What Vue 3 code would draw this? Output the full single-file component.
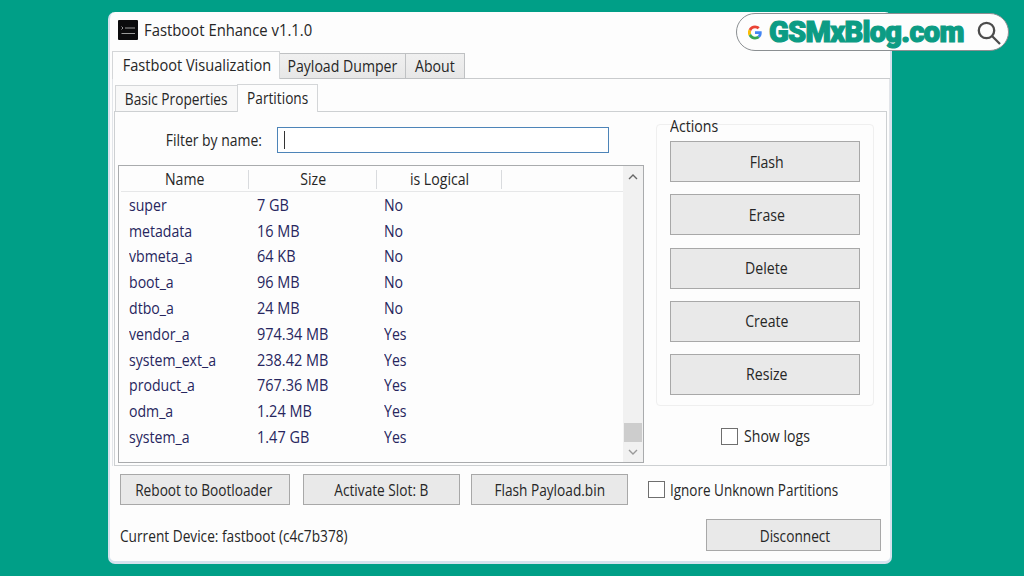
<template>
  <div class="desktop">
    <div class="window">
      <header class="titlebar">
        <svg class="app-icon" viewBox="0 0 20 20">
          <rect width="20" height="20" rx="1" fill="#0b0b0d" />
          <path d="M3.500 6.500l1.500 1.500-1.500 1.500M7 8H17M3.500 13.500H17" fill="none" stroke="#aaa" stroke-width="0.9" />
        </svg>
        <span class="text t-title">Fastboot Enhance v1.1.0</span>
      </header>

      <nav class="tabs main-tabs">
        <div class="tab active"><span class="text t-visual">Fastboot Visualization</span></div>
        <div class="tab grey dumper"><span class="text">Payload Dumper</span></div>
        <div class="tab grey about"><span class="text">About</span></div>
      </nav>

      <div class="page">
        <nav class="tabs sub-tabs">
          <div class="tab basic"><span class="text t-narrow">Basic Properties</span></div>
          <div class="tab active parts"><span class="text t-narrow">Partitions</span></div>
        </nav>

        <section class="panel">
          <div class="left">
            <div class="filter">
              <label class="text t-filter">Filter by name:</label>
              <div class="input"><i class="caret"></i></div>
            </div>
            <div class="list">
              <div class="table">
                <div class="row head">
                  <div class="cell"><span class="text">Name</span></div>
                  <div class="cell"><span class="text">Size</span></div>
                  <div class="cell"><span class="text">is Logical</span></div>
                </div>
                <div v-for="p in partitions" :key="p.name" class="row">
                  <div class="cell"><span class="text">{{ p.name }}</span></div>
                  <div class="cell"><span class="text t-size">{{ p.size }}</span></div>
                  <div class="cell"><span class="text">{{ p.logical }}</span></div>
                </div>
              </div>
              <div class="scrollbar">
                <svg class="arrow" viewBox="0 0 10 6"><path d="M1 5l4-4 4 4" /></svg>
                <div class="thumb"></div>
                <svg class="arrow down" viewBox="0 0 10 6"><path d="M1 1l4 4 4-4" /></svg>
              </div>
            </div>
          </div>

          <div class="right">
            <div class="group">
              <div class="legend"><span class="text">Actions</span></div>
              <div v-for="a in actions" :key="a" class="btn"><span class="text">{{ a }}</span></div>
            </div>
            <div class="check logs"><i class="box"></i><span class="text">Show logs</span></div>
          </div>
        </section>
      </div>

      <div class="bottom">
        <div class="btn reboot"><span class="text t-narrow">Reboot to Bootloader</span></div>
        <div class="btn slot"><span class="text t-narrow">Activate Slot: B</span></div>
        <div class="btn payload"><span class="text t-narrow">Flash Payload.bin</span></div>
        <div class="check"><i class="box"></i><span class="text t-ignore">Ignore Unknown Partitions</span></div>
      </div>

      <footer class="status">
        <span class="text t-device">Current Device: fastboot (c4c7b378)</span>
        <div class="btn disconnect"><span class="text t-narrow">Disconnect</span></div>
      </footer>
    </div>

    <div class="badge">
      <svg class="google" viewBox="0 0 48 48">
        <path fill="#ea4335" d="M24 9.500c3.500 0 6.700 1.200 9.200 3.600l6.900-6.900C35.900 2.400 30.500 0 24 0 14.600 0 6.500 5.400 2.600 13.200l8 6.200C12.400 13.700 17.700 9.500 24 9.500z" />
        <path fill="#4285f4" d="M47 24.600c0-1.600-.2-3.100-.4-4.600H24v9h12.900c-.6 3-2.200 5.500-4.700 7.200l7.700 6C44.400 38 47 31.800 47 24.600z" />
        <path fill="#fbbc05" d="M10.500 28.600A14.500 14.500 0 0 1 10.500 19.400l-8-6.200a24 24 0 0 0 0 21.600z" />
        <path fill="#34a853" d="M24 48c6.500 0 11.900-2.100 15.900-5.800l-7.700-6c-2.200 1.500-4.900 2.300-8.200 2.300-6.300 0-11.600-4.200-13.500-9.900l-8 6.200C6.500 42.600 14.600 48 24 48z" />
      </svg>
      <span class="site">GSMxBlog.com</span>
      <svg class="search" viewBox="0 0 24 24">
        <circle cx="9.500" cy="9.500" r="7.700" />
        <path d="M15 15l8 8" />
      </svg>
    </div>
  </div>
</template>

<script setup>
const partitions = [
  { name: 'super', size: '7 GB', logical: 'No' },
  { name: 'metadata', size: '16 MB', logical: 'No' },
  { name: 'vbmeta_a', size: '64 KB', logical: 'No' },
  { name: 'boot_a', size: '96 MB', logical: 'No' },
  { name: 'dtbo_a', size: '24 MB', logical: 'No' },
  { name: 'vendor_a', size: '974.34 MB', logical: 'Yes' },
  { name: 'system_ext_a', size: '238.42 MB', logical: 'Yes' },
  { name: 'product_a', size: '767.36 MB', logical: 'Yes' },
  { name: 'odm_a', size: '1.24 MB', logical: 'Yes' },
  { name: 'system_a', size: '1.47 GB', logical: 'Yes' },
];

const actions = ['Flash', 'Erase', 'Delete', 'Create', 'Resize'];
</script>

<style>
body {
  margin: 0;
  overflow: hidden;
}
</style>

<style scoped>
* {
  box-sizing: border-box;
}

.desktop {
  position: relative;
  width: 1024px;
  height: 576px;
  padding: 12px 0 0 108px;
  background: #009f87;
  color: #262626;
  font-family: 'Open Sans', 'Noto Sans', sans-serif;
  font-size: 15.500px;
  line-height: 20px;
  white-space: nowrap;
}

/* slightly condensed labels */
.text {
  display: inline-block;
  transform: scaleX(0.91);
}

.t-title {
  transform: scaleX(0.958);
  transform-origin: left;
}

.t-visual {
  transform: scaleX(0.94);
}

.t-narrow {
  transform: scaleX(0.882);
}

.t-filter {
  transform: scaleX(0.9);
  transform-origin: right;
}

.t-ignore {
  transform: scaleX(0.87);
  transform-origin: left;
}

.t-device {
  transform: scaleX(0.883);
  transform-origin: left;
}

.window {
  width: 784px;
  height: 552px;
  padding-left: 2px;
  background: #fdfdfd;
  border: solid #d5e2ed;
  border-width: 0 2px 3px;
  border-radius: 7px;
}

.titlebar {
  display: flex;
  align-items: center;
  gap: 6px;
  height: 39px;
  padding: 0 0 3px 6px;
}

.app-icon {
  width: 20px;
  height: 20px;
}

.tabs {
  display: flex;
  align-items: flex-end;
}

.tab {
  display: flex;
  align-items: center;
  justify-content: center;
  padding-bottom: 1px;
  border: 1px solid #d4d6d8;
  border-bottom: 0;
}

.main-tabs {
  height: 28px;
  box-shadow: inset 0 -1px #c9cbcd;
}

.main-tabs .active {
  width: 168px;
  height: 28px;
  padding-left: 1px;
  background: #fdfdfd;
}

.main-tabs .grey {
  height: 26px;
  padding-bottom: 0;
  background: linear-gradient(#f0f0f0, #e7e7e7);
  border: 1px solid #bfc1c3;
  border-left: 0;
}

.dumper {
  width: 126px;
}

.about {
  width: 59px;
}

.page {
  width: 778px;
  height: 387px;
  padding: 5px 2px 0 1px;
  border: solid #e2e5e9;
  border-width: 0 1px;
}

.sub-tabs {
  height: 27px;
  padding-left: 1px;
}

.basic {
  width: 122px;
  height: 26px;
  padding-bottom: 0;
  background: #f8f8f8;
  border-right: 0;
}

.parts {
  position: relative;
  width: 81px;
  height: 28px;
  margin-bottom: -1px;
  padding-bottom: 2px;
  background: #fdfdfd;
}

.panel {
  display: flex;
  width: 773px;
  height: 355px;
  padding: 0 11px 0 3px;
  border: 1px solid #cdd0d2;
}

.left {
  width: 526px;
}

.filter {
  display: flex;
  align-items: center;
  justify-content: flex-end;
  height: 27px;
  margin: 14px 35px 12px 0;
}

.input {
  width: 332px;
  height: 26px;
  margin-left: 15px;
  padding: 3px 6px;
  background: #fff;
  border: 1.500px solid #4d84b8;
}

.caret {
  display: block;
  width: 1px;
  height: 18px;
  background: #333;
}

.list {
  display: flex;
  height: 298px;
  border: 1px solid #a9abad;
}

.table {
  flex: 1;
  padding-left: 2px;
  color: #27265e;
}

.row {
  display: flex;
  align-items: center;
  height: 25.800px;
}

.cell {
  width: 127.700px;
  padding-left: 8px;
}

.cell .text {
  transform-origin: left;
}

.cell .t-size {
  transform: scaleX(0.935);
}

.row.head {
  height: 26px;
  padding-top: 2px;
  color: #262626;
  border-bottom: 1px solid #e6e7e8;
}

.head .cell {
  width: 128px;
  height: 19px;
  padding: 0 0 0 1px;
  line-height: 18px;
  text-align: center;
  border-right: 1px solid #d9dbde;
}

.head .text {
  transform-origin: center;
}

.head .cell:last-child {
  width: 125px;
}

.scrollbar {
  display: flex;
  flex-direction: column;
  align-items: center;
  justify-content: flex-end;
  width: 20px;
  padding: 8px 0 7px;
  background: #f1f1f1;
}

.arrow {
  width: 10px;
  height: 6px;
  margin-bottom: auto;
  fill: none;
  stroke: #666;
  stroke-width: 1.400;
}

.arrow.down {
  margin: 7px 0 0;
  stroke: #999;
}

.thumb {
  width: 18px;
  height: 19px;
  background: #cdcdcd;
}

.right {
  display: flex;
  flex-direction: column;
  align-items: center;
  width: 218px;
  margin-left: 12px;
}

.group {
  display: flex;
  flex-direction: column;
  gap: 12.200px;
  width: 218px;
  height: 282px;
  margin-top: 12px;
  padding: 0 13px;
  border: 1px solid #efefef;
  border-radius: 4px;
}

.legend {
  align-self: flex-start;
  height: 4px;
  line-height: 2px;
  background: #fdfdfd;
}

.legend .text,
.check .text {
  transform-origin: left;
}

.btn {
  display: flex;
  align-items: center;
  justify-content: center;
  background: #e9e9e9;
  border: 1px solid #a8a8a8;
}

.group .btn {
  height: 41px;
  padding-left: 3px;
}

.check {
  display: flex;
  align-items: center;
}

.box {
  width: 17px;
  height: 17px;
  margin-right: 6px;
  background: #fff;
  border: 1px solid #6f6f6f;
}

.logs {
  margin: 20px 0 0 8px;
}

.bottom {
  display: flex;
  align-items: center;
  height: 31px;
  margin-top: 8px;
  padding-left: 8px;
}

.bottom .btn {
  height: 31px;
}

.reboot {
  width: 170px;
  margin-right: 13px;
  padding-right: 3px;
}

.slot {
  width: 157px;
  margin-right: 11px;
}

.payload {
  width: 157px;
  margin-right: 20px;
}

.bottom .box {
  margin-right: 5px;
}

.status {
  display: flex;
  align-items: center;
  justify-content: space-between;
  height: 32px;
  margin-top: 14px;
  padding: 0 9px 0 8px;
}

.t-device {
  padding-top: 2px;
}

.disconnect {
  width: 175px;
  height: 32px;
  padding: 1px 0 0 3px;
}

.badge {
  position: absolute;
  top: 13px;
  left: 736px;
  display: flex;
  align-items: center;
  width: 273px;
  height: 38px;
  padding-left: 11px;
  background: #fdfdfd;
  border: 1px solid #8b8f92;
  border-radius: 19px;
}

.google {
  width: 14px;
  height: 15px;
}

.site {
  width: 201px;
  margin-left: 7px;
  color: #0c9c84;
  font-family: Roboto, sans-serif;
  font-size: 29px;
  font-weight: 900;
  letter-spacing: -0.700px;
  line-height: 32px;
  -webkit-text-stroke: 1.200px #0c9c84;
}

.search {
  width: 24px;
  height: 24px;
  margin: 2px 0 0 7px;
  fill: none;
  stroke: #4c4c4c;
  stroke-width: 2.300;
}
</style>
